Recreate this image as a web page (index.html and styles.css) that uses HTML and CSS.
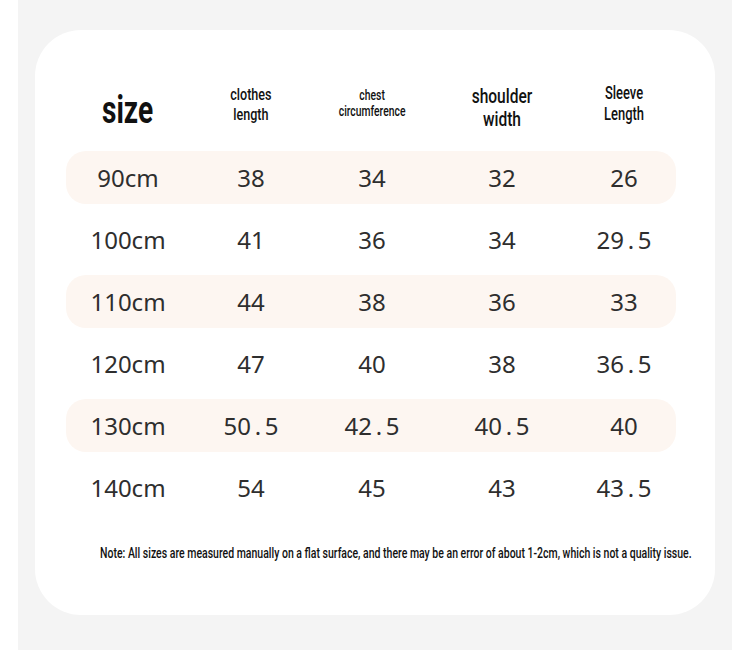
FILE: index.html
```html
<!DOCTYPE html>
<html>
<head>
<meta charset="utf-8">
<link rel="stylesheet" href="styles.css">
</head>
<body>
<div class="page">
  <div class="card">
    <div class="row head">
      <div class="cell"><span class="lbl lbl-size">size</span></div>
      <div class="cell"><span class="lbl lbl-clothes">clothes<br>length</span></div>
      <div class="cell"><span class="lbl lbl-chest">chest<br>circumference</span></div>
      <div class="cell"><span class="lbl lbl-shoulder">shoulder<br>width</span></div>
      <div class="cell"><span class="lbl lbl-sleeve">Sleeve<br>Length</span></div>
    </div>
    <div class="rows">
      <div class="row data band">
        <div class="cell">90cm</div><div class="cell">38</div><div class="cell">34</div><div class="cell">32</div><div class="cell">26</div>
      </div>
      <div class="row data">
        <div class="cell">100cm</div><div class="cell">41</div><div class="cell">36</div><div class="cell">34</div><div class="cell">29<span class="dot">.</span>5</div>
      </div>
      <div class="row data band">
        <div class="cell">110cm</div><div class="cell">44</div><div class="cell">38</div><div class="cell">36</div><div class="cell">33</div>
      </div>
      <div class="row data">
        <div class="cell">120cm</div><div class="cell">47</div><div class="cell">40</div><div class="cell">38</div><div class="cell">36<span class="dot">.</span>5</div>
      </div>
      <div class="row data band">
        <div class="cell">130cm</div><div class="cell">50<span class="dot">.</span>5</div><div class="cell">42<span class="dot">.</span>5</div><div class="cell">40<span class="dot">.</span>5</div><div class="cell">40</div>
      </div>
      <div class="row data">
        <div class="cell">140cm</div><div class="cell">54</div><div class="cell">45</div><div class="cell">43</div><div class="cell">43<span class="dot">.</span>5</div>
      </div>
    </div>
    <p class="note"><span class="note-text">Note: All sizes are measured manually on a flat surface, and there may be an error of about 1-2cm, which is not a quality issue.</span></p>
  </div>
</div>
</body>
</html>
```
FILE: styles.css
```css
html, body {
  margin: 0;
  padding: 0;
  background: #ffffff;
}

.page {
  margin: 0 18px;
  height: 650px;
  background: #f4f4f4;
  padding: 30px 17px 0 17px;
  box-sizing: border-box;
}

.card {
  background: #ffffff;
  border-radius: 46px;
  height: 585px;
  padding: 26px 39px 0 31px;
  box-sizing: border-box;
}

.row {
  display: grid;
  grid-template-columns: 124px 122px 120px 140px 104px;
  align-items: center;
}

.cell {
  text-align: center;
}

.head {
  height: 95px;
}

.lbl {
  display: inline-block;
  font-family: Roboto, "Liberation Sans", sans-serif;
  font-weight: 500;
  color: #111;
  transform: scaleX(0.74);
}

.lbl-size {
  font-size: 38px;
  font-weight: 700;
  line-height: 40px;
  position: relative;
  top: 6px;
}

.lbl-clothes {
  font-size: 17px;
  line-height: 20px;
}

.lbl-chest {
  font-size: 14px;
  line-height: 16px;
}

.lbl-shoulder {
  font-size: 21px;
  line-height: 23px;
  position: relative;
  top: 4px;
}

.lbl-sleeve {
  font-size: 17.5px;
  line-height: 21px;
}

.rows {
  display: flex;
  flex-direction: column;
  gap: 9px;
}

.data {
  height: 53px;
  font-family: "Noto Sans", "Open Sans", sans-serif;
  font-size: 24px;
  color: #2e2e2e;
  border-radius: 20px;
}

.band {
  background: #fdf6f1;
}

.dot {
  display: inline-block;
  width: 0.57em;
  text-align: center;
}

.note {
  margin: 31px -30px 0 34px;
  overflow: hidden;
  font-family: Roboto, "Liberation Sans", sans-serif;
  font-weight: 500;
  font-size: 14.2px;
  line-height: 16px;
  color: #111;
  white-space: nowrap;
}

.note-text {
  display: inline-block;
  transform: scaleX(0.74);
  transform-origin: left center;
}
```
